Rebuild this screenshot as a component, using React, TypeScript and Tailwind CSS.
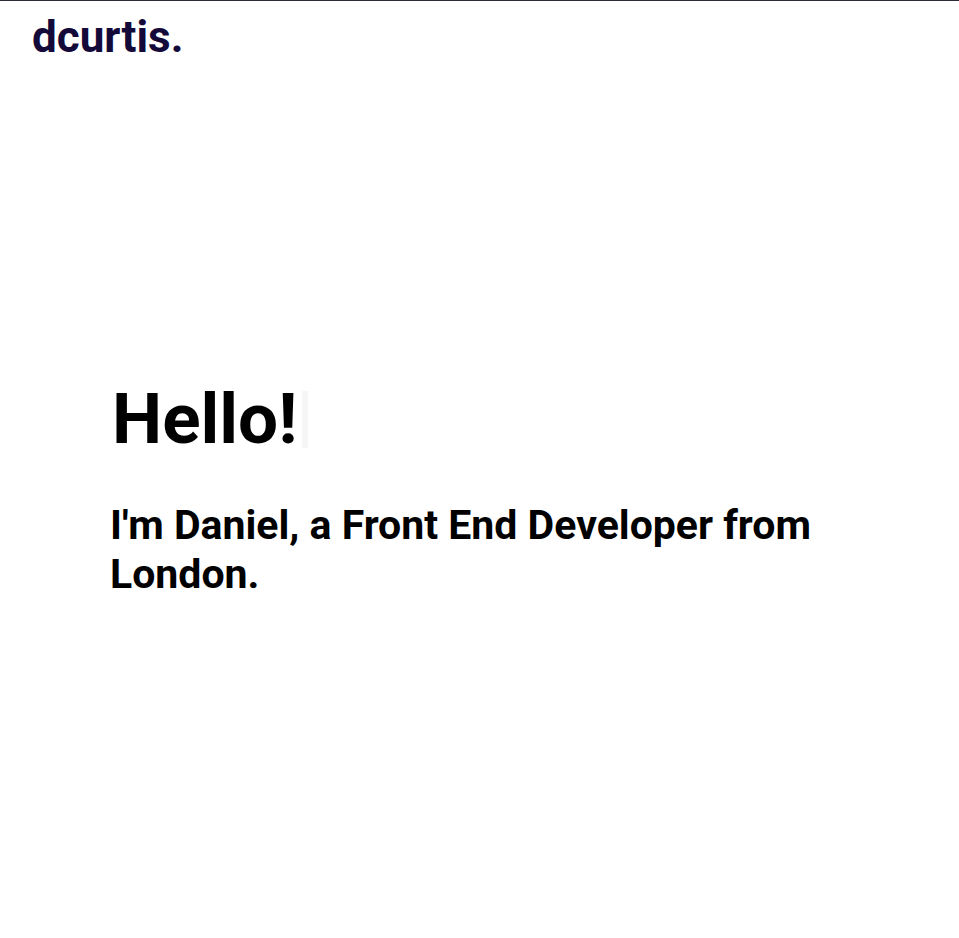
const App = () => {
  return (
    <div
      className="min-h-[938px] bg-white border-t border-[#2b2b3c]"
      style={{ fontFamily: "Roboto, sans-serif" }}
    >
      <header className="px-8 pt-[8px]">
        <a href="#" className="text-[44px] leading-[56px] font-bold text-[#140a3a]">
          dcurtis.
        </a>
      </header>

      <main className="px-[110px] pt-[318px]">
        <h1 className="flex items-center pl-[2px] text-[71px] leading-[72px] font-bold text-black">
          <span>Hello!</span>
          <span className="ml-[5px] w-[6px] h-[57px] bg-[#f6f6f6]"></span>
        </h1>
        <h2 className="mt-[46px] max-w-[740px] text-[41px] leading-[49px] font-bold text-black">
          I&apos;m Daniel, a Front End Developer from London.
        </h2>
      </main>
    </div>
  );
};

export default App;
